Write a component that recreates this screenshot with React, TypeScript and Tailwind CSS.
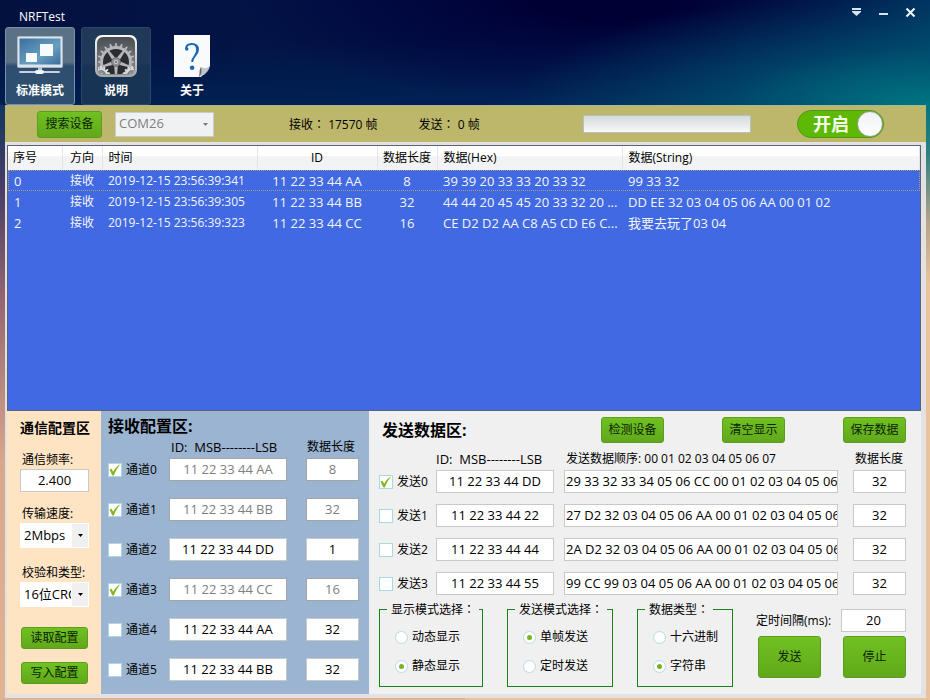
import React, { useState } from 'react';

interface Frame {
  seq: string;
  direction: string;
  time: string;
  id: string;
  length: string;
  hex: string;
  text: string;
}

interface Channel {
  label: string;
  id: string;
  length: string;
  enabled: boolean;
}

interface SendRow extends Channel {
  data: string;
}

const frames: Frame[] = [
  { seq: '0', direction: '接收', time: '2019-12-15 23:56:39:341', id: '11 22 33 44 AA', length: '8', hex: '39 39 20 33 33 20 33 32', text: '99 33 32' },
  { seq: '1', direction: '接收', time: '2019-12-15 23:56:39:305', id: '11 22 33 44 BB', length: '32', hex: '44 44 20 45 45 20 33 32 20 ...', text: 'DD EE 32 03 04 05 06 AA 00 01 02' },
  { seq: '2', direction: '接收', time: '2019-12-15 23:56:39:323', id: '11 22 33 44 CC', length: '16', hex: 'CE D2 D2 AA C8 A5 CD E6 C...', text: '我要去玩了03 04' },
];

const initialChannels: Channel[] = [
  { label: '通道0', id: '11 22 33 44 AA', length: '8', enabled: true },
  { label: '通道1', id: '11 22 33 44 BB', length: '32', enabled: true },
  { label: '通道2', id: '11 22 33 44 DD', length: '1', enabled: false },
  { label: '通道3', id: '11 22 33 44 CC', length: '16', enabled: true },
  { label: '通道4', id: '11 22 33 44 AA', length: '32', enabled: false },
  { label: '通道5', id: '11 22 33 44 BB', length: '32', enabled: false },
];

const initialSendRows: SendRow[] = [
  { label: '发送0', id: '11 22 33 44 DD', data: '29 33 32 33 34 05 06 CC 00 01 02 03 04 05 06', length: '32', enabled: true },
  { label: '发送1', id: '11 22 33 44 22', data: '27 D2 32 03 04 05 06 AA 00 01 02 03 04 05 06', length: '32', enabled: false },
  { label: '发送2', id: '11 22 33 44 44', data: '2A D2 32 03 04 05 06 AA 00 01 02 03 04 05 06', length: '32', enabled: false },
  { label: '发送3', id: '11 22 33 44 55', data: '99 CC 99 03 04 05 06 AA 00 01 02 03 04 05 06', length: '32', enabled: false },
];

// full-width colon, centred in its box
function Colon() {
  return <span className="font-['Noto_Sans_CJK_TC',sans-serif]">：</span>;
}

function GreenButton({ children, className = '' }: { children: React.ReactNode; className?: string }) {
  return (
    <button
      type="button"
      className={`rounded-[3px] border border-[#5c9c1e] bg-linear-to-b from-[#70c121] to-[#61a81b] text-xs text-[#0b1f02] ${className}`}
    >
      {children}
    </button>
  );
}

function Field({ label, value, className = '', disabled = false }: { label: string; value: string; className?: string; disabled?: boolean }) {
  return (
    <input
      aria-label={label}
      defaultValue={value}
      disabled={disabled}
      className={`h-[23px] min-w-0 border border-[#c8c8c8] bg-white pb-0.5 text-[13px] text-black disabled:border-[#a3a3a3] disabled:text-[#808080] ${className}`}
    />
  );
}

function Check({ label, checked, onChange }: { label: string; checked: boolean; onChange: () => void }) {
  return (
    <label className="flex items-center gap-1 whitespace-nowrap text-xs">
      <span className="relative size-3.5 shrink-0">
        <input
          type="checkbox"
          checked={checked}
          onChange={onChange}
          className="block size-3.5 appearance-none border border-[#acd8e3] bg-white"
        />
        {checked && (
          <svg viewBox="0 0 14 14" className="pointer-events-none absolute inset-0 size-3.5">
            <path d="M1.5 6.5 L3.5 5.8 L5.2 8.8 C7 5 9.5 2.6 12.5 1.2 C9.5 4.5 7.5 8 5.8 12.6 L4.4 12.6 Z" fill="#84b61c" />
          </svg>
        )}
      </span>
      {label}
    </label>
  );
}

function RadioBox({ name, title, options, initial, className = '' }: { name: string; title: string; options: string[]; initial: string; className?: string }) {
  const [value, setValue] = useState(initial);
  return (
    <fieldset className={`h-[86px] border border-[#17851b] pl-[15px] ${className}`}>
      <legend className="-ml-2 px-1 text-xs leading-4">{title}<Colon /></legend>
      <div className="flex flex-col gap-[13px] pt-[11px]">
        {options.map(option => (
          <label key={option} className="flex items-center gap-1 text-xs leading-4">
            <span className="grid size-[13px] shrink-0 place-items-center">
              <input
                type="radio"
                name={name}
                checked={value === option}
                onChange={() => setValue(option)}
                className="col-start-1 row-start-1 size-[13px] appearance-none rounded-full border border-[#b4dbe5] bg-white"
              />
              {value === option && <span className="col-start-1 row-start-1 size-[5px] rounded-full bg-[#7cb01c]" />}
            </span>
            {option}
          </label>
        ))}
      </div>
    </fieldset>
  );
}

function Combo({ label, value }: { label: string; value: string }) {
  return (
    <div className="relative">
      <select aria-label={label} className="block h-[25px] w-full appearance-none overflow-hidden border border-white bg-white pl-[3px] pr-[17px] text-[13px] text-black">
        <option>{value}</option>
      </select>
      <span className="pointer-events-none absolute inset-y-px right-px flex w-4 items-center justify-center bg-[#f0f0f0]">
        <svg viewBox="0 0 5 3" className="h-[3px] w-[5px]"><path d="M0 0H5L2.5 3Z" fill="#000" /></svg>
      </span>
    </div>
  );
}

function MonitorIcon() {
  return (
    <svg viewBox="0 0 46 40" className="h-10 w-[46px]">
      <defs>
        <linearGradient id="screen" x1="0" y1="0" x2="1" y2="1">
          <stop offset="0" stopColor="#3a6f9f" />
          <stop offset="0.6" stopColor="#6a9fc0" />
          <stop offset="1" stopColor="#3b6c9b" />
        </linearGradient>
      </defs>
      <rect x="0.5" y="1.5" width="45" height="31" rx="1" fill="#dde5ec" stroke="#a7b7c8" />
      <rect x="2.5" y="3.5" width="41" height="26" fill="url(#screen)" />
      <rect x="23" y="9" width="13" height="12" fill="#f6fafc" />
      <rect x="9" y="18" width="11" height="9" fill="#f6fafc" />
      <path d="M21 32H25V36H21Z" fill="#b9c7d4" />
      <rect x="2" y="36" width="41" height="2" rx="1" fill="#c8d2dc" />
      <rect x="18" y="35" width="9" height="4" rx="2" fill="#f0f4f7" />
    </svg>
  );
}

function Gear({ cx, cy, r, teeth, color, spokes = 0 }: { cx: number; cy: number; r: number; teeth: number; color: string; spokes?: number }) {
  const step = 360 / teeth;
  return (
    <g transform={`translate(${cx} ${cy})`}>
      {Array.from({ length: teeth }, (_, i) => (
        <path key={i} d={`M-1.3 ${-r + 1}L-0.7 ${-r - 3}H0.7L1.3 ${-r + 1}Z`} fill={color} transform={`rotate(${i * step})`} />
      ))}
      <circle r={r - 1.5} fill="none" stroke={color} strokeWidth="3" />
      {Array.from({ length: spokes }, (_, i) => (
        <path key={i} d={`M-2.2 0L-1 ${-r + 2}H1L2.2 0Z`} fill={color} transform={`rotate(${i * (360 / spokes) + 36})`} />
      ))}
      <circle r="4.5" fill="#8b8e92" stroke="#595c60" strokeWidth="0.6" />
      <circle r="2" fill="#d6d7d9" />
      <circle r="0.9" fill="#4a4d51" />
    </g>
  );
}

function GearsIcon() {
  return (
    <svg viewBox="0 0 42 42" className="size-[42px]">
      <defs>
        <linearGradient id="plate" x1="0" y1="0" x2="0" y2="1">
          <stop offset="0" stopColor="#4a4d52" />
          <stop offset="1" stopColor="#8a8d91" />
        </linearGradient>
        <linearGradient id="rim" x1="0" y1="0" x2="0" y2="1">
          <stop offset="0" stopColor="#fbfbfc" />
          <stop offset="1" stopColor="#a4a7ab" />
        </linearGradient>
        <clipPath id="plateClip"><rect x="3" y="3" width="36" height="36" rx="5" /></clipPath>
      </defs>
      <rect width="42" height="42" rx="7" fill="url(#rim)" />
      <rect x="2" y="2" width="38" height="38" rx="6" fill="url(#plate)" />
      <g clipPath="url(#plateClip)">
        <circle cx="21" cy="27" r="15" fill="#2a2c30" />
        <Gear cx={21} cy={27} r={16} teeth={20} color="#b4b6b9" spokes={5} />
        <Gear cx={6} cy={40} r={6} teeth={14} color="#d8dadc" />
        <Gear cx={37} cy={40} r={6} teeth={14} color="#d8dadc" />
      </g>
    </svg>
  );
}

function HelpIcon() {
  return (
    <svg viewBox="0 0 36 42" className="h-[42px] w-9">
      <path d="M0 0H36V31L27 42H0Z" fill="#f9fafb" />
      <path d="M36 31C33 34 29 33 27 32C28 36 28 39 25 42C30 41 35 36 36 31Z" fill="#c3c8cc" />
      <path d="M27 32C28 36 28 39 25 42C26 37 25 35 27 32Z" fill="#666" />
      <path d="M12 14C12 10.5 14.5 9 17.8 9C21.8 9 24 11.3 24 14.6C24 20.5 18.2 20.8 18.2 27" fill="none" stroke="#1968b8" strokeWidth="2" />
      <path d="M21 9.9C24.5 12 24 17 20.8 20.2C23.1 16.5 23 13 21 9.9Z" fill="#1968b8" stroke="#1968b8" />
      <circle cx="12.8" cy="14" r="1.7" fill="#1968b8" />
      <circle cx="18.1" cy="32.7" r="2.3" fill="#1968b8" />
    </svg>
  );
}

const navItems = [
  { label: '标准模式', icon: <MonitorIcon />, style: 'border-[#7890a8] bg-linear-to-b from-[#5b7185] from-45% to-[#2f4f70] to-50%' },
  { label: '说明', icon: <GearsIcon />, style: 'border-[#28476b] bg-linear-to-b from-[#213959] from-45% to-[#173454] to-50%' },
  { label: '关于', icon: <HelpIcon />, style: 'border-transparent' },
];

function TitleBar() {
  return (
    <header className="flex h-[105px] items-start justify-between pl-[5px] pr-[13px]">
      <div>
        <h1 className="pl-3.5 pt-[7px] text-xs leading-5 text-white">NRFTest</h1>
        <nav className="flex gap-1.5">
          {navItems.map(item => (
            <button
              key={item.label}
              type="button"
              className={`flex h-[78px] w-[70px] flex-col items-center justify-between rounded-[3px] border pb-[5px] pt-[7px] text-xs font-bold leading-4 text-white ${item.style}`}
            >
              {item.icon}
              {item.label}
            </button>
          ))}
        </nav>
      </div>
      <div className="flex gap-3.5 pt-1.5">
        <button type="button" aria-label="菜单" className="size-[13px]">
          <svg viewBox="0 0 13 13" fill="#d5e6ef"><path d="M2 2H11V4H2ZM2 5H11V6L6.5 10L2 6Z" /></svg>
        </button>
        <button type="button" aria-label="最小化" className="size-[13px]">
          <svg viewBox="0 0 13 13" fill="#d5e6ef"><path d="M2 7H11V9H2Z" /></svg>
        </button>
        <button type="button" aria-label="关闭" className="size-[13px]">
          <svg viewBox="0 0 13 13" stroke="#f3f8fa" strokeWidth="2"><path d="M2.5 2.5L10.5 10.5M10.5 2.5L2.5 10.5" /></svg>
        </button>
      </div>
    </header>
  );
}

function Toolbar() {
  return (
    <div className="flex h-[37px] items-center border-t border-[#a9b695] bg-[#bdb76b] pl-8 pr-[42px] text-xs">
      <GreenButton className="h-[27px] w-[65px] shrink-0">搜索设备</GreenButton>
      <div className="relative ml-[13px] w-[99px] shrink-0">
        <select aria-label="串口" disabled className="block h-[25px] w-full appearance-none border border-[#c9cacb] bg-[#f0f1f2] px-[3px] text-[13px] text-[#808080] opacity-100">
          <option>COM26</option>
        </select>
        <svg viewBox="0 0 5 3" className="pointer-events-none absolute right-[6px] top-[11px] h-[3px] w-[5px]"><path d="M0 0H5L2.5 3Z" fill="#777" /></svg>
      </div>
      <span className="ml-[75px] whitespace-pre">接收<Colon /> 17570 帧</span>
      <span className="ml-[41px] whitespace-pre">发送<Colon /> 0 帧</span>
      <div
        role="progressbar"
        aria-label="发送进度"
        className="ml-auto h-[18px] w-[168px] border border-[#b8c0c0] bg-linear-to-b from-[#d4dadd] to-[#f7f8f8]"
      />
      <button
        type="button"
        role="switch"
        aria-checked="true"
        className="ml-[46px] flex h-7 w-[87px] items-center justify-between rounded-full border border-[#4f9a15] bg-[#5db904] pl-[15px] text-lg font-bold leading-none text-[#f2fbe8]"
      >
        开启
        <span className="size-[26px] rounded-full border border-[#8fa09a] bg-linear-to-b from-[#f0f2f3] to-white" />
      </button>
    </div>
  );
}

function FrameTable() {
  return (
    <div className="h-[266px] border border-[#5d6278] bg-[#4169e1]">
      <table className="w-full table-fixed border-collapse text-[13px] leading-5 text-[#f3f5fd]">
        <colgroup>
          <col className="w-[54px]" />
          <col className="w-10" />
          <col className="w-[155px]" />
          <col className="w-[120px]" />
          <col className="w-[60px]" />
          <col className="w-[185px]" />
          <col />
        </colgroup>
        <thead>
          <tr className="h-6 bg-linear-to-b from-white from-40% to-[#f2f3f5] to-45% text-xs text-black *:border-r *:border-[#e3e5e8] *:font-normal">
            <th className="pl-[5px] text-left">序号</th>
            <th className="text-center">方向</th>
            <th className="pl-[6px] text-left">时间</th>
            <th className="text-center">ID</th>
            <th className="text-center">数据长度</th>
            <th className="pl-[6px] text-left">数据(Hex)</th>
            <th className="pl-[6px] text-left">数据(String)</th>
          </tr>
        </thead>
        <tbody>
          {frames.map((frame, index) => (
            <tr key={frame.seq} className={index === 0 ? 'h-[21px] outline outline-1 -outline-offset-1 outline-dotted outline-[#a59c8a]' : 'h-[21px]'}>
              <td className="pl-[6px]">{frame.seq}</td>
              <td className="text-center text-xs">{frame.direction}</td>
              <td className="whitespace-nowrap pl-[6px] text-xs">{frame.time}</td>
              <td className="text-center">{frame.id}</td>
              <td className="text-center">{frame.length}</td>
              <td className="truncate pl-[6px]">{frame.hex}</td>
              <td className="truncate pl-[6px]">{frame.text}</td>
            </tr>
          ))}
        </tbody>
      </table>
    </div>
  );
}

function CommPanel() {
  return (
    <section className="flex w-[94px] shrink-0 flex-col bg-[#ffe4c4] pl-[13px] pr-3 pt-[7px] text-xs">
      <h2 className="whitespace-nowrap text-center text-sm font-bold leading-5">通信配置区</h2>
      <label className="flex flex-col pt-3 leading-[19px]">
        <span className="pl-0.5">通信频率:</span>
        <Field label="通信频率" value="2.400" className="text-center" />
      </label>
      <div className="flex flex-col pt-3 leading-[19px]">
        <span className="pl-0.5">传输速度:</span>
        <Combo label="传输速度" value="2Mbps" />
      </div>
      <div className="flex flex-col pt-[15px] leading-[19px]">
        <span className="whitespace-nowrap pl-0.5">校验和类型:</span>
        <Combo label="校验和类型" value="16位CRC" />
      </div>
      <GreenButton className="mx-px mt-5 h-[22px]">读取配置</GreenButton>
      <GreenButton className="mx-px mt-[13px] h-[22px]">写入配置</GreenButton>
    </section>
  );
}

function ReceivePanel() {
  const [channels, setChannels] = useState(initialChannels);

  const toggle = (label: string) => {
    setChannels(prev => prev.map(c => (c.label === label ? { ...c, enabled: !c.enabled } : c)));
  };

  return (
    <section className="w-[268px] shrink-0 bg-[#9ab4d1] pl-[7px] pr-[10px] pt-[3px] text-xs">
      <h2 className="text-base font-bold leading-6">接收配置区:</h2>
      <div className="flex justify-between pl-[63px] pr-1 pt-px leading-4">
        <span className="whitespace-pre text-[13px]">ID:  MSB--------LSB</span>
        <span>数据长度</span>
      </div>
      <div className="flex flex-col gap-[17px] pt-[3px]">
        {channels.map(c => (
          <div key={c.label} className="flex items-center">
            <div className="w-[61px] shrink-0"><Check label={c.label} checked={c.enabled} onChange={() => toggle(c.label)} /></div>
            <Field label={`${c.label} ID`} value={c.id} disabled={c.enabled} className="w-[118px] text-center" />
            <Field label={`${c.label} 数据长度`} value={c.length} disabled={c.enabled} className="ml-auto w-[53px] text-center" />
          </div>
        ))}
      </div>
    </section>
  );
}

function SendPanel() {
  const [rows, setRows] = useState(initialSendRows);

  const toggle = (label: string) => {
    setRows(prev => prev.map(r => (r.label === label ? { ...r, enabled: !r.enabled } : r)));
  };

  return (
    <section className="min-w-0 flex-1 bg-[#f0f0f0] pl-[10px] pr-[15px] pt-[6px] text-xs">
      <div className="flex items-center">
        <h2 className="w-[222px] whitespace-nowrap pl-[3px] text-base font-bold leading-6">发送数据区:</h2>
        <div className="flex flex-1 justify-between">
          <GreenButton className="h-[26px] w-[63px]">检测设备</GreenButton>
          <GreenButton className="h-[26px] w-[63px]">清空显示</GreenButton>
          <GreenButton className="h-[26px] w-[63px]">保存数据</GreenButton>
        </div>
      </div>
      <div className="flex pt-1.5 leading-5">
        <span className="w-[187px] shrink-0 whitespace-pre pl-[57px] text-[13px]">ID:  MSB--------LSB</span>
        <span className="whitespace-nowrap">发送数据顺序: 00 01 02 03 04 05 06 07</span>
        <span className="ml-auto pr-[3px]">数据长度</span>
      </div>
      <div className="flex flex-col gap-[11px] pt-px">
        {rows.map(r => (
          <div key={r.label} className="flex items-center">
            <div className="w-[57px] shrink-0"><Check label={r.label} checked={r.enabled} onChange={() => toggle(r.label)} /></div>
            <Field label={`${r.label} ID`} value={r.id} className="w-[118px] text-center" />
            <Field label={`${r.label} 数据`} value={r.data} className="ml-2.5 mr-[15px] flex-1 pl-px" />
            <Field label={`${r.label} 数据长度`} value={r.length} className="w-[53px] text-center" />
          </div>
        ))}
      </div>
      <div className="flex pt-[6px]">
        <RadioBox name="display" title="显示模式选择" options={['动态显示', '静态显示']} initial="静态显示" className="w-[104px]" />
        <RadioBox name="sending" title="发送模式选择" options={['单帧发送', '定时发送']} initial="单帧发送" className="ml-6 w-[106px]" />
        <RadioBox name="dataType" title="数据类型" options={['十六进制', '字符串']} initial="字符串" className="ml-6 w-24" />
        <div className="ml-auto w-[150px] pt-2">
          <label className="flex items-center justify-between">
            <span className="whitespace-nowrap">定时间隔(ms):</span>
            <Field label="定时间隔(ms)" value="20" className="w-[65px] text-center" />
          </label>
          <div className="flex justify-end gap-[22px] pt-1">
            <GreenButton className="h-[42px] w-[63px]">发送</GreenButton>
            <GreenButton className="h-[42px] w-[63px]">停止</GreenButton>
          </div>
        </div>
      </div>
    </section>
  );
}

export default function App() {
  return (
    <div className="flex min-h-screen flex-col bg-[#dfb595] font-['Open_Sans','Noto_Sans_CJK_SC',sans-serif] text-black">
      <div className="bg-[radial-gradient(ellipse_45%_110%_at_100%_100%,#007680,#00557490_50%,transparent),radial-gradient(ellipse_40%_100%_at_65%_0%,#000035_20%,#00003c90_60%,transparent),linear-gradient(to_bottom,transparent_40%,#002c6080),linear-gradient(to_right,#03113f,#02164a_50%,#003b66)]">
        <TitleBar />
      </div>
      <div className="flex flex-1 flex-col bg-[linear-gradient(to_bottom,#00767f,#2e8080_8%,#b8a58a_20%,#ebc39c_30%,#e8c39e),linear-gradient(to_bottom,#123660,#4d3f66_15%,#9c6b74_35%,#d6a88c_60%,#e0b492)] bg-[position:right,left] bg-[size:50%_100%,100%_100%] bg-no-repeat pb-0.5 pl-[5px] pr-1">
        <Toolbar />
        <main className="flex flex-1 flex-col bg-[#e2e2e2] pb-1 pl-0.5 pr-[5px] pt-[3px]">
          <FrameTable />
          <div className="flex flex-1">
            <CommPanel />
            <ReceivePanel />
            <SendPanel />
          </div>
        </main>
      </div>
    </div>
  );
}
